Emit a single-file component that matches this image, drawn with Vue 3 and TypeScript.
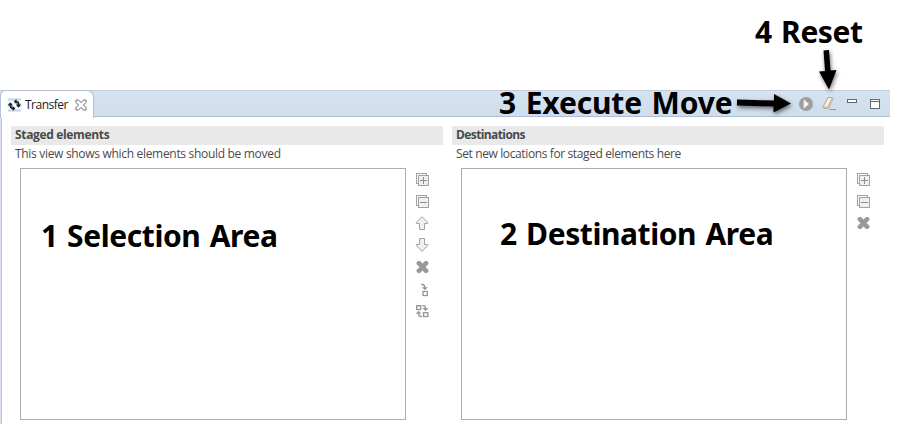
<script setup lang="ts">
type IconName = 'expand' | 'collapse' | 'up' | 'down' | 'remove' | 'single' | 'swap'

interface Panel {
  title: string
  hint: string
  kind: string
  actions: IconName[]
}

const panels: Panel[] = [
  {
    title: 'Staged elements',
    hint: 'This view shows which elements should be moved',
    kind: 'staged',
    actions: ['expand', 'collapse', 'up', 'down', 'remove', 'single', 'swap'],
  },
  {
    title: 'Destinations',
    hint: 'Set new locations for staged elements here',
    kind: 'dest',
    actions: ['expand', 'collapse', 'remove'],
  },
]
</script>

<template>
  <div class="page">
    <section class="view">
      <header class="bar">
        <div class="tab">
          <svg class="tab-icon" width="15" height="14" viewBox="0 0 15 14">
            <path d="M1 1.500H14M1 12.500H14" stroke="#bcd5f4" stroke-width="2" />
            <path d="M0 5.500H15M0 8.500H15" stroke="#e0ebf9" stroke-width="1" />
            <path d="M3.500 6V8Q3.500 10.500 7 10.500M11.500 8V6Q11.500 3.500 8.500 3.500" fill="none" stroke="#1c1c1c" stroke-width="1.700" />
            <path d="M.5 7.500L3.300 4.300L6 7.500ZM8.800 6.500H14.300L11.500 9.700ZM5.700 8L8.500 10.500L5.700 13ZM9.500 1L6.700 3.500L9.500 6Z" fill="#1c1c1c" />
          </svg>
          <span class="tab-name">Transfer</span>
          <svg class="tab-close" width="12" height="12" viewBox="0 0 12 12">
            <path d="M1 1H3.500L6 3.500L8.500 1H11V3.500L8.500 6L11 8.500V11H8.500L6 8.500L3.500 11H1V8.500L3.500 6L1 3.500Z" fill="#fff" stroke="#6a6a6a" stroke-width="1" />
          </svg>
        </div>
        <div class="tools">
          <svg width="16" height="16" viewBox="0 0 16 16">
            <circle cx="8" cy="8" r="7" fill="#9e9e9e" />
            <path d="M5.700 3.200V12.800L11 8Z" fill="#f4f4f4" />
          </svg>
          <svg width="16" height="16" viewBox="0 0 16 16">
            <path d="M7 1.500H11.500L12 2.500L7.500 12.500H3L2 11Z" fill="#f5efe6" stroke="#b1a28c" stroke-width="1" stroke-linejoin="round" />
            <path d="M2 10.500L6 10.800L7.500 12.500H3Z" fill="#cbbca5" />
            <path d="M11.900 3L7.400 12.300L6.300 10.700L10.500 2Z" fill="#cdbda3" />
            <path d="M8.500 13.500H15" stroke="#9d978b" />
          </svg>
          <svg width="16" height="16" viewBox="0 0 16 16">
            <rect x="3.500" y="3.500" width="9" height="3" fill="#fff" stroke="#686868" />
          </svg>
          <svg width="16" height="16" viewBox="0 0 16 16">
            <rect x="3.500" y="3.500" width="9" height="9" fill="#fff" stroke="#686868" />
            <path d="M3 5.500H13" stroke="#686868" />
          </svg>
        </div>
      </header>

      <div class="body">
        <article v-for="panel in panels" :key="panel.kind" class="panel" :class="panel.kind">
          <h2 class="title"><span>{{ panel.title }}</span></h2>
          <p class="hint"><span>{{ panel.hint }}</span></p>
          <div class="content">
            <div class="list"></div>
            <div class="actions">
              <svg v-for="name in panel.actions" :key="name" width="16" height="16" viewBox="0 0 16 16">
                <g v-if="name === 'expand' || name === 'collapse'" stroke="#a2a2a2">
                  <rect x="1.500" y="1.500" width="10" height="10" fill="#fafafa" />
                  <rect x="3.500" y="3.500" width="10" height="10" fill="#f0f0f0" />
                  <path d="M5 8.500H12" stroke="#8e8e8e" />
                  <path v-if="name === 'expand'" d="M8.500 5V12" stroke="#8e8e8e" />
                </g>
                <path v-else-if="name === 'up'" d="M7 .7L12.700 6.500V7.500H9.500V13.500H4.500V7.500H1.300V6.500Z" fill="#f0f0f0" stroke="#a2a2a2" />
                <path v-else-if="name === 'down'" d="M4.500 .5H9.500V6.500H12.700V7.500L7 13.300L1.300 7.500V6.500H4.500Z" fill="#f0f0f0" stroke="#a2a2a2" />
                <path v-else-if="name === 'remove'" d="M3 1H5L7.500 3.500L10 1H12L13.500 2.500V4L10.500 7L13.500 10V11.500L12 13H10L7.500 10.500L5 13H3L1.500 11.500V10L4.500 7L1.500 4V2.500Z" fill="#999" />
                <g v-else-if="name === 'single'" fill="none" stroke="#999">
                  <path d="M6 2.500H7.500Q9.800 2.500 9.800 6" stroke-width="1.400" />
                  <path d="M6.800 5.300H12.800L9.800 8.300Z" fill="#999" stroke="none" />
                  <path d="M7 9.500H13" />
                  <rect x="8" y="9.500" width="4.300" height="4" stroke-width="1.300" />
                </g>
                <g v-else fill="none" stroke="#999" stroke-width="1.400">
                  <rect x="1.700" y="1.700" width="4" height="3.800" />
                  <rect x="8.500" y="8.700" width="4.300" height="3.800" />
                  <path d="M7.500 1.700H8.500Q10.500 1.700 10.500 4.500M7 12.500H6Q3.500 12.500 3.500 9.500" />
                  <path d="M7.500 4H13.500L10.500 7.200ZM.7 9.700H6.500L3.600 6.700Z" fill="#999" stroke="none" />
                </g>
              </svg>
            </div>
          </div>
        </article>
      </div>
    </section>

    <div class="note selection">1 Selection Area</div>
    <div class="note destination">2 Destination Area</div>
    <div class="note execute">3 Execute Move</div>
    <div class="note reset">4 Reset</div>
    <svg class="arrow to-execute" width="64" height="28" viewBox="0 0 64 28">
      <path d="M2 8.500L39 9.500V3L56 12.500L38.500 21.500V15.500L2 14.500Z" />
    </svg>
    <svg class="arrow to-reset" width="30" height="46" viewBox="0 0 30 46">
      <path d="M8.500 2.500L14 2L15.500 22.500L21.500 22L14 41.500L4 23.500L10 23Z" />
    </svg>
  </div>
</template>

<style>
body {
  margin: 0;
  background: #fff;
}
</style>

<style scoped>
.page {
  position: relative;
  box-sizing: border-box;
  width: 909px;
  height: 424px;
  padding-top: 90px;
  overflow: hidden;
  background: #fff;
  font-family: "Noto Sans", "Open Sans", sans-serif;
}
.view {
  box-sizing: border-box;
  width: 890px;
  height: 334px;
}
.bar {
  box-sizing: border-box;
  display: flex;
  justify-content: space-between;
  height: 27px;
  border-top: 1px solid #c3cad9;
  border-bottom: 1px solid #b0bdd6;
  background: linear-gradient(#d5e2ef, #cfddec);
}
.tab {
  box-sizing: border-box;
  display: flex;
  align-items: center;
  width: 94px;
  height: 28px;
  padding: 0 0 0 6px;
  border: 1px solid #b5c0d6;
  border-width: 1px 1px 0;
  border-radius: 6px 7px 0 0;
  margin-top: -1px;
  background: #fff;
}
.tab-icon,
.tab-close {
  flex: none;
}
.tab-name {
  flex: none;
  width: 43px;
  margin: 1px 7px 0 3px;
  color: #1c1c1c;
  font: 12px/16px "Open Sans", sans-serif;
  letter-spacing: -0.5px;
  white-space: nowrap;
}
.tools {
  display: flex;
  gap: 7px;
  padding: 5px 7px 0 0;
}
.body {
  box-sizing: border-box;
  display: flex;
  gap: 9px;
  height: 307px;
  padding: 9px 0 0 10px;
  border-left: 1px solid #d9e1f2;
  box-shadow: inset 1px 0 #b8c3db;
}
.panel {
  width: 432px;
}
.title,
.hint {
  margin: 0;
  padding-left: 4px;
  color: #4a4a4a;
  font: 12px/18px "Open Sans", sans-serif;
  white-space: nowrap;
}
.title {
  height: 19px;
  border-radius: 1px 2px 0 0;
  background: #e9e9e9;
  font-weight: 700;
  letter-spacing: -0.34px;
}
.hint {
  height: 18px;
  letter-spacing: -0.31px;
}
.dest .title {
  letter-spacing: -0.6px;
}
.dest .hint {
  letter-spacing: -0.38px;
}
.content {
  display: flex;
  gap: 9px;
  padding: 5px 0 0 9px;
}
.list {
  box-sizing: border-box;
  width: 386px;
  height: 252px;
  border: 1px solid #abadb3;
  background: #fff;
}
.dest .list {
  border-color: #ababab;
}
.actions {
  display: flex;
  flex-direction: column;
  gap: 6px;
  padding-top: 4px;
}
.actions svg,
.tools svg {
  display: block;
  flex: none;
}
.note {
  position: absolute;
  color: #000;
  font: 700 30px/40px "Noto Sans", sans-serif;
  letter-spacing: -0.42px;
  word-spacing: 2px;
  white-space: nowrap;
}
.selection { left: 41px; top: 216px; }
.destination { left: 500px; top: 214px; }
.execute { left: 499px; top: 83px; letter-spacing: -0.15px; }
.reset { left: 755px; top: 12px; }
.arrow {
  position: absolute;
  fill: #000;
  filter: drop-shadow(1px 2px 2px rgb(0 0 0 / 55%));
}
.to-execute { left: 735px; top: 91px; }
.to-reset { left: 815px; top: 48px; }
</style>
